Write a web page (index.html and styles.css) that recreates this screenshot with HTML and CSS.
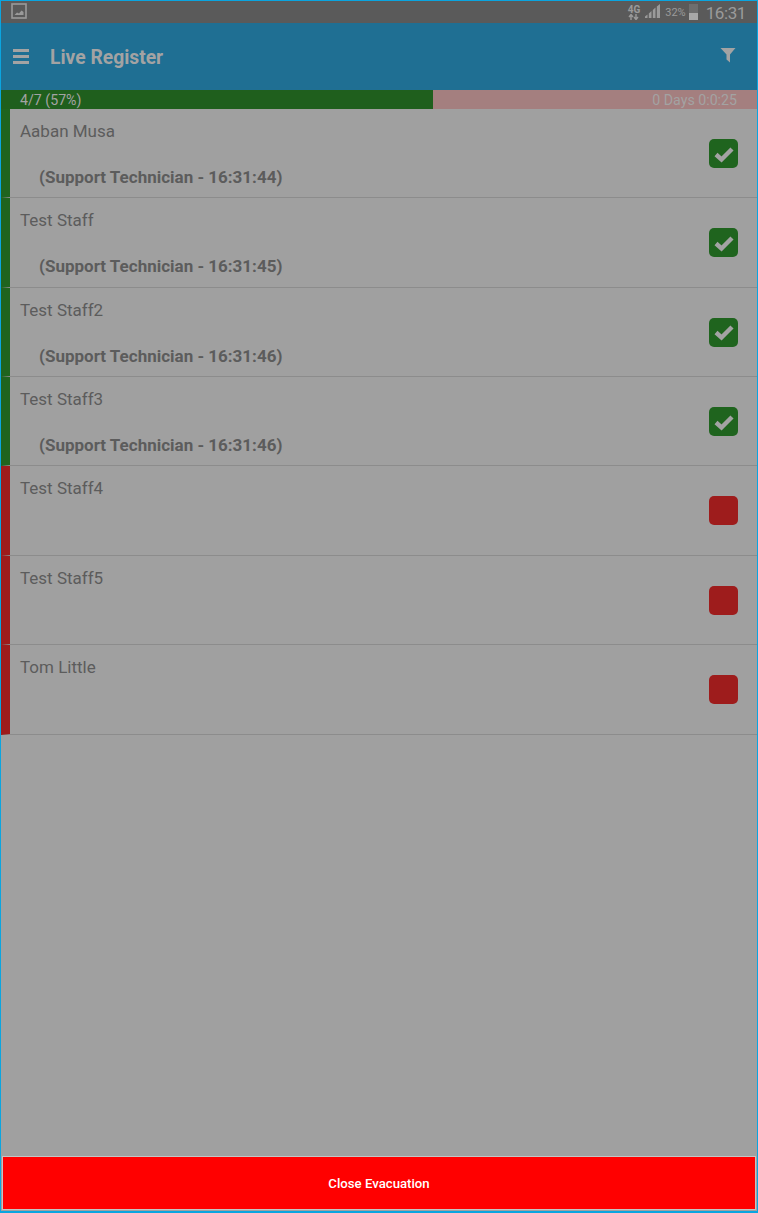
FILE: index.html
```html
<!DOCTYPE html>
<html lang="en">
<head>
    <meta charset="UTF-8">
    <meta name="viewport" content="width=device-width, initial-scale=1.0">
    <title>Live Register</title>
    <link rel="stylesheet" href="styles.css">
</head>
<body>
    <div class="app">
        <div class="status-bar">
            <svg class="gallery-icon" width="16" height="16" viewBox="0 0 16 16">
                <rect x="1" y="1" width="14" height="14" fill="none" stroke="#9a9a9a" stroke-width="1.6"/>
                <path d="M3.5 12 L6 9.5 L8 10.5 L10.5 7.5 L12.5 9 V12 Z" fill="#9a9a9a"/>
            </svg>
            <div class="status-right">
                <div class="network">
                    <span>4G</span>
                    <svg width="11" height="6" viewBox="0 0 11 6">
                        <path d="M3 6 V2 M1 3 L3 0.5 L5 3 M8 0 V4 M6 3 L8 5.5 L10 3" fill="none" stroke="#9a9a9a" stroke-width="1.4"/>
                    </svg>
                </div>
                <svg class="signal" width="15" height="14" viewBox="0 0 15 14">
                    <path d="M0 14 V12.5 L2.5 10.5 V14 Z M3.8 14 V9.5 L6.5 7 V14 Z M7.8 14 V6 L10.5 3.5 V14 Z M11.8 14 V2.5 L15 0 V14 Z" fill="#9a9a9a"/>
                </svg>
                <span class="battery-text">32%</span>
                <div class="battery"><div class="battery-fill"></div></div>
                <span class="clock">16:31</span>
            </div>
        </div>

        <header class="toolbar">
            <div class="toolbar-left">
                <div class="hamburger"><i></i><i></i><i></i></div>
                <h1>Live Register</h1>
            </div>
            <svg class="filter-icon" width="16" height="16" viewBox="0 0 16 16">
                <path d="M0.5 1 H15.5 L10 7.5 V15.5 L6.5 12.5 V7.5 Z" fill="#a3a3a3"/>
            </svg>
        </header>

        <div class="progress">
            <div class="progress-done">4/7 (57%)</div>
            <div class="progress-left">0 Days 0:0:25</div>
        </div>

        <div class="register">
            <div class="row in">
                <div class="row-text">
                    <div class="name">Aaban Musa</div>
                    <div class="detail">(Support Technician - 16:31:44)</div>
                </div>
                <div class="tick"><svg width="22" height="18" viewBox="0 0 22 18"><path d="M3 9.5 L8.5 14.5 L19 4" fill="none" stroke="#a3a3a3" stroke-width="4.4"/></svg></div>
            </div>
            <div class="row in">
                <div class="row-text">
                    <div class="name">Test Staff</div>
                    <div class="detail">(Support Technician - 16:31:45)</div>
                </div>
                <div class="tick"><svg width="22" height="18" viewBox="0 0 22 18"><path d="M3 9.5 L8.5 14.5 L19 4" fill="none" stroke="#a3a3a3" stroke-width="4.4"/></svg></div>
            </div>
            <div class="row in">
                <div class="row-text">
                    <div class="name">Test Staff2</div>
                    <div class="detail">(Support Technician - 16:31:46)</div>
                </div>
                <div class="tick"><svg width="22" height="18" viewBox="0 0 22 18"><path d="M3 9.5 L8.5 14.5 L19 4" fill="none" stroke="#a3a3a3" stroke-width="4.4"/></svg></div>
            </div>
            <div class="row in">
                <div class="row-text">
                    <div class="name">Test Staff3</div>
                    <div class="detail">(Support Technician - 16:31:46)</div>
                </div>
                <div class="tick"><svg width="22" height="18" viewBox="0 0 22 18"><path d="M3 9.5 L8.5 14.5 L19 4" fill="none" stroke="#a3a3a3" stroke-width="4.4"/></svg></div>
            </div>
            <div class="row out">
                <div class="row-text"><div class="name">Test Staff4</div></div>
                <div class="tick"></div>
            </div>
            <div class="row out">
                <div class="row-text"><div class="name">Test Staff5</div></div>
                <div class="tick"></div>
            </div>
            <div class="row out">
                <div class="row-text"><div class="name">Tom Little</div></div>
                <div class="tick"></div>
            </div>
        </div>

        <button class="close-btn">Close Evacuation</button>
    </div>
</body>
</html>
```

FILE: styles.css
```css
* {
    margin: 0;
    padding: 0;
    box-sizing: border-box;
    font-family: Roboto, 'Liberation Sans', sans-serif;
}

body {
    background-color: #a0a0a0;
}

.app {
    width: 758px;
    height: 1213px;
    border: 1px solid #0aa5e0;
    border-bottom-width: 2px;
    background-color: #a0a0a0;
    display: flex;
    flex-direction: column;
    overflow: hidden;
}

.status-bar {
    height: 22px;
    flex-shrink: 0;
    background-color: #5a5a5a;
    display: flex;
    justify-content: space-between;
    align-items: center;
    padding: 0 11px 0 10px;
    color: #9a9a9a;
}

.gallery-icon {
    margin-bottom: 2px;
}

.status-right {
    display: flex;
    align-items: center;
}

.network {
    display: flex;
    flex-direction: column;
    align-items: center;
    margin-right: 5px;
    font-size: 10px;
    line-height: 9px;
    font-weight: 700;
}

.network svg {
    display: block;
}

.signal {
    margin-right: 5px;
    margin-bottom: 2px;
}

.battery-text {
    font-size: 11px;
    margin-right: 3px;
}

.battery {
    width: 9px;
    height: 16px;
    background-color: #6e6e6e;
    display: flex;
    align-items: flex-end;
    margin-right: 8px;
}

.battery-fill {
    width: 100%;
    height: 7px;
    background-color: #a8a8a8;
}

.clock {
    font-size: 17px;
    letter-spacing: -0.4px;
    line-height: 22px;
    margin-top: 2px;
}

.toolbar {
    height: 67px;
    flex-shrink: 0;
    background-color: #1f6f93;
    display: flex;
    justify-content: space-between;
    align-items: center;
    padding: 0 21px 0 12px;
}

.toolbar-left {
    display: flex;
    align-items: center;
}

.hamburger {
    width: 16px;
    margin-right: 21px;
}

.hamburger i {
    display: block;
    height: 3px;
    margin: 2px 0 3px;
    background-color: #a3a3a3;
}

.toolbar h1 {
    font-size: 19.3px;
    font-weight: 700;
    color: #a3a3a3;
    margin-top: 2px;
}

.filter-icon {
    margin-bottom: 4px;
}

.progress {
    height: 19px;
    flex-shrink: 0;
    display: flex;
    font-size: 14.2px;
    line-height: 21px;
    color: #a3a3a3;
}

.progress-done {
    width: 432px;
    background-color: #1f5f1d;
    padding-left: 19px;
}

.progress-left {
    flex: 1;
    background-color: #a47f7f;
    text-align: right;
    padding-right: 20px;
}

.row {
    height: 89.37px;
    display: flex;
    justify-content: space-between;
    border-bottom: 1px solid #8c8c8c;
    border-left: 9px solid;
    padding: 12px 19px 0 10px;
}

.row.in {
    border-left-color: #1f641e;
}

.row.out {
    border-left-color: #9e1c1c;
}

.name {
    font-size: 17px;
    line-height: 20px;
    color: #5c5c5c;
}

.detail {
    font-size: 17px;
    line-height: 20px;
    font-weight: 700;
    color: #5c5c5c;
    margin: 26px 0 0 19px;
}

.tick {
    width: 29px;
    height: 29px;
    margin-top: 18px;
    border-radius: 5px;
    display: flex;
    align-items: center;
    justify-content: center;
}

.in .tick {
    background-color: #1f641e;
}

.out .tick {
    background-color: #9e1c1c;
}

.register {
    flex: 1;
}

.close-btn {
    height: 54px;
    margin: 0 1px 1px 1px;
    flex-shrink: 0;
    border: 1px solid #c4c4c4;
    background-color: #ff0000;
    color: #ffffff;
    font-size: 13.2px;
    font-weight: 500;
}
```
